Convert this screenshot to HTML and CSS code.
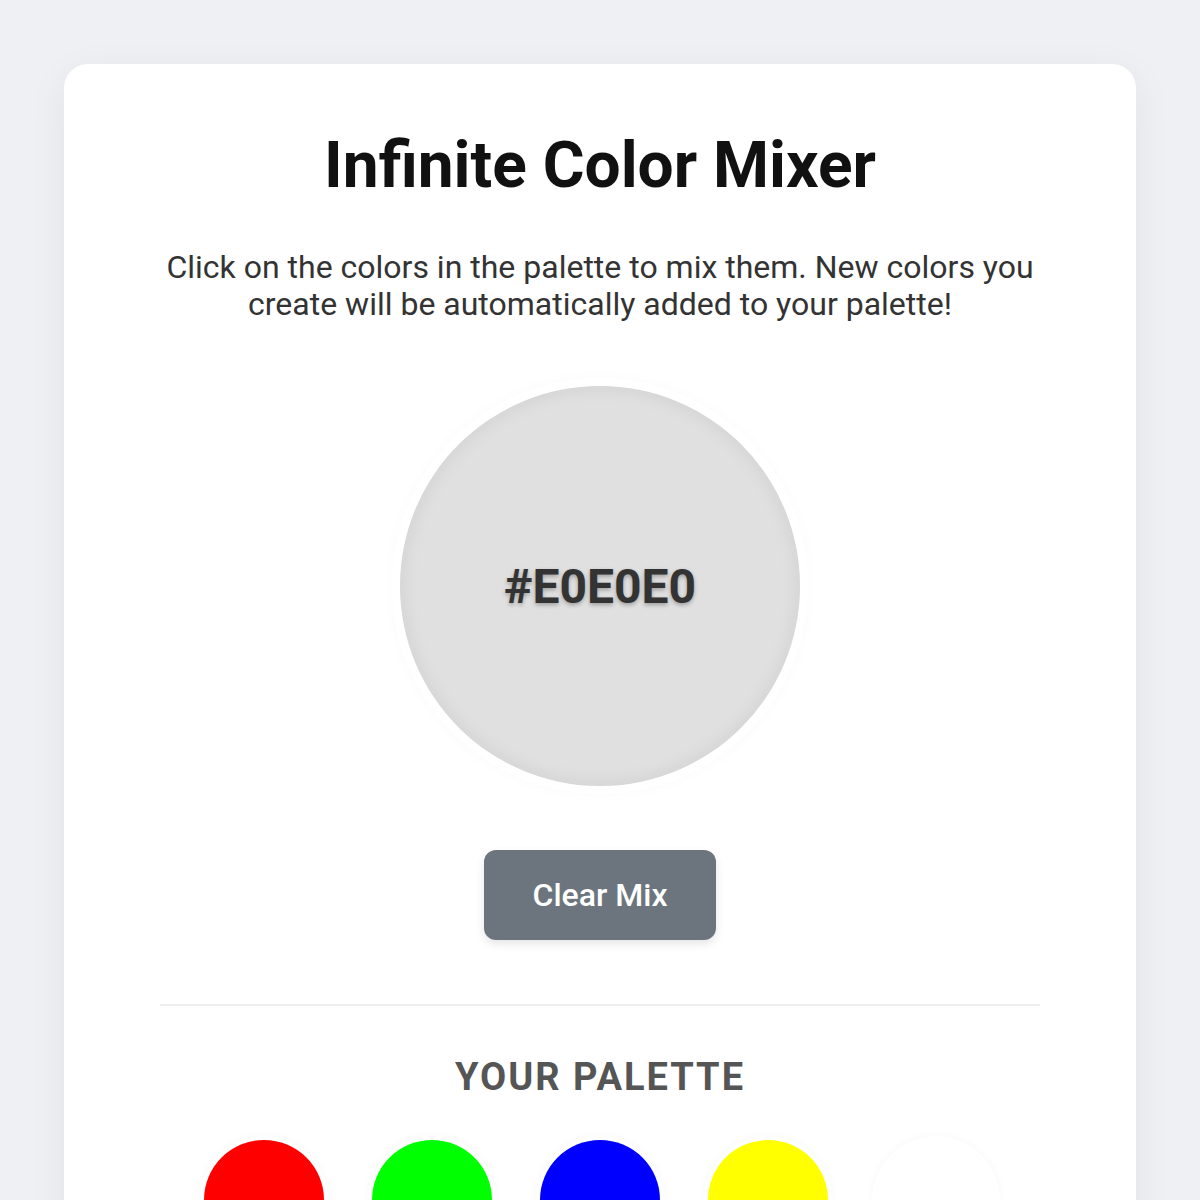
FILE: index.html
```html
<!DOCTYPE html>
<html lang="en">
<head>
    <meta charset="UTF-8">
    <meta name="viewport" content="width=device-width, initial-scale=1.0">
    <title>Infinite Color Mixer</title>
    <link rel="stylesheet" href="styles.css">
</head>
<body>
    <div class="container">
        <h1>Infinite Color Mixer</h1>
        <p class="intro">Click on the colors in the palette to mix them. New colors you create will be automatically added to your palette!</p>

        <div class="mix-area">
            <div class="mix-circle" id="mix-circle">
                <span class="mix-label" id="mix-label">#E0E0E0</span>
            </div>
        </div>

        <button id="btn-clear" class="btn-clear">Clear Mix</button>

        <hr class="divider">

        <h2 class="palette-title">Your Palette</h2>
        <div class="palette" id="palette">
            <div class="swatch" style="background: #ff0000;"></div>
            <div class="swatch" style="background: #00ff00;"></div>
            <div class="swatch" style="background: #0000ff;"></div>
            <div class="swatch" style="background: #ffff00;"></div>
            <div class="swatch" style="background: #ffffff;"></div>
        </div>
    </div>
</body>
</html>
```

FILE: styles.css
```css
* {
    margin: 0;
    padding: 0;
    box-sizing: border-box;
    font-family: 'Roboto', 'Liberation Sans', sans-serif;
}
body {
    background-color: #eef0f4;
    padding: 64px;
}
.container {
    background: #ffffff;
    border-radius: 24px;
    box-shadow: 0 10px 40px rgba(0, 0, 0, 0.06);
    padding: 64px 96px;
    text-align: center;
    display: flex;
    flex-direction: column;
    align-items: center;
}
h1 {
    font-size: 64px;
    font-weight: 700;
    color: #111;
    line-height: 1.2;
}
.intro {
    margin-top: 44px;
    font-size: 32px;
    line-height: 1.15;
    color: #333;
}
.mix-area {
    margin-top: 64px;
}
.mix-circle {
    width: 400px;
    height: 400px;
    border-radius: 50%;
    background: #e0e0e0;
    display: flex;
    align-items: center;
    justify-content: center;
    box-shadow: inset 0 0 20px rgba(0, 0, 0, 0.08),
                0 0 0 8px #fff,
                0 0 22px rgba(0, 0, 0, 0.05);
}
.mix-label {
    font-size: 48px;
    font-weight: 700;
    color: #333;
    text-shadow: 0 2px 4px rgba(0, 0, 0, 0.3);
}
.btn-clear {
    margin-top: 64px;
    width: 232px;
    height: 90px;
    background: #6c757d;
    color: #fff;
    border: none;
    border-radius: 12px;
    font-size: 32px;
    font-weight: 500;
    cursor: pointer;
    box-shadow: 0 4px 10px rgba(0, 0, 0, 0.1);
}
.btn-clear:hover {
    background: #5a6268;
}
.divider {
    align-self: stretch;
    margin-top: 64px;
    border: none;
    border-top: 2px solid #eeeeee;
}
.palette-title {
    margin-top: 49px;
    font-size: 38px;
    font-weight: 700;
    color: #555;
    text-transform: uppercase;
    letter-spacing: 2px;
}
.palette {
    margin-top: 41px;
    display: flex;
    gap: 48px;
    justify-content: center;
}
.swatch {
    width: 120px;
    height: 120px;
    border-radius: 50%;
    box-shadow: 0 0 0 4px #fff, 0 0 12px rgba(0, 0, 0, 0.08);
    cursor: pointer;
}
```
